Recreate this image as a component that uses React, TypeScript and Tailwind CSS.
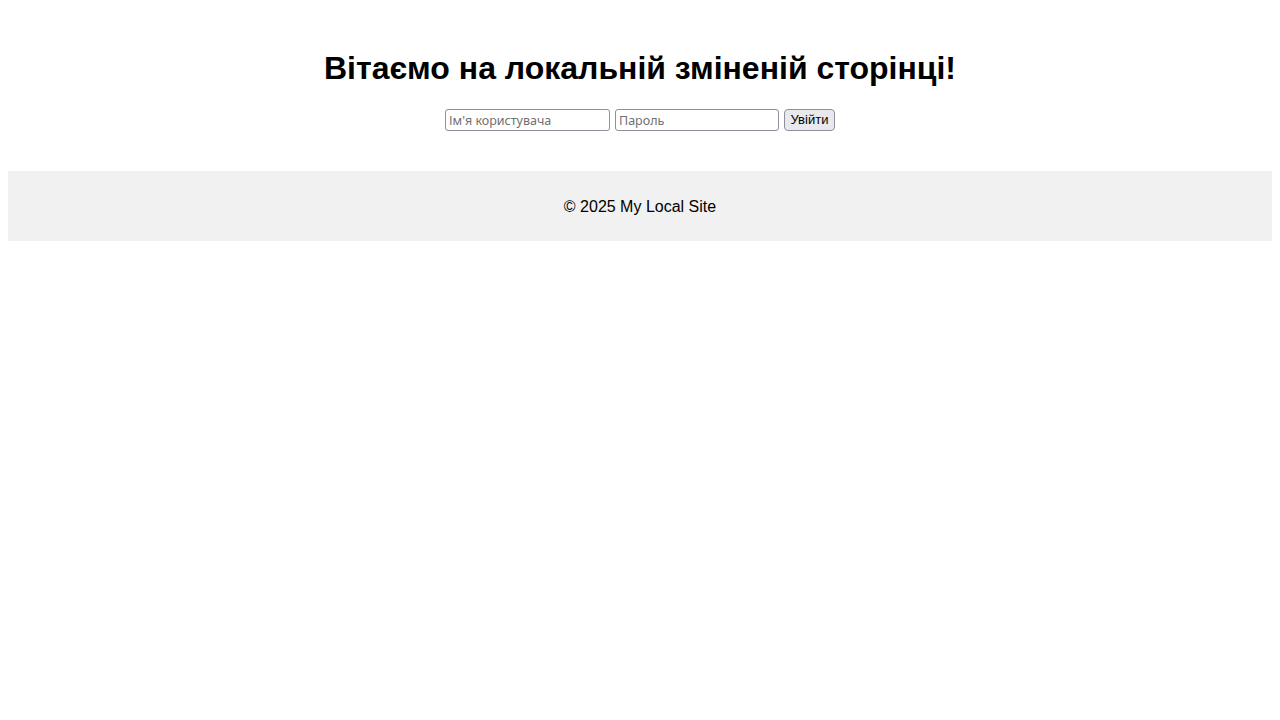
export default function App() {
  return (
    <div className="m-2 text-black">
      <main className="pt-[42px] pb-[40px] text-center">
        <h1 className="mb-[22px] font-['Liberation_Sans',Arial,sans-serif] text-[32px] font-bold leading-[37px]">
          Вітаємо на локальній зміненій сторінці!
        </h1>
        <form className="flex items-center justify-center gap-[5px] font-['Noto_Sans',sans-serif] text-[12.5px]">
          <input
            type="text"
            placeholder="Ім'я користувача"
            className="h-[22px] w-[165px] rounded-[3px] border border-[#8f8f9d] bg-white px-[3px] leading-[20px] placeholder:text-[#707070] outline-none"
          />
          <input
            type="password"
            placeholder="Пароль"
            className="h-[22px] w-[164px] rounded-[3px] border border-[#8f8f9d] bg-white px-[3px] leading-[20px] placeholder:text-[#707070] outline-none"
          />
          <button
            type="button"
            className="h-[22px] w-[51px] rounded-[4px] border border-[#8f8f9d] bg-[#e9e9ed] px-[4px] font-['Liberation_Sans',Arial,sans-serif] text-[13px] leading-[20px] text-black"
          >
            Увійти
          </button>
        </form>
      </main>
      <footer className="bg-[#f1f1f1] pt-[27px] pb-[25px] text-center font-['Liberation_Sans',Arial,sans-serif] text-[16px] leading-[18px]">
        © 2025 My Local Site
      </footer>
    </div>
  );
}
